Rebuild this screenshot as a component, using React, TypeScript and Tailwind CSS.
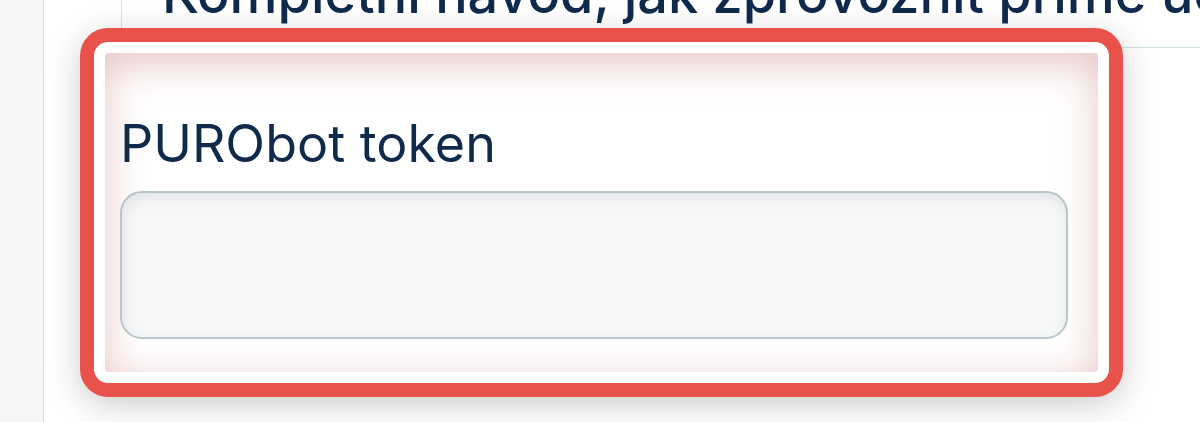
export default function App() {
  return (
    <div className="flex h-[422px] w-[1200px] overflow-hidden bg-white font-['Inter',sans-serif]">
      <div className="w-[44px] shrink-0 border-r border-[#d3e3e5] bg-[#f4f6f8]" />
      <div className="flex min-w-0 flex-1 flex-col">
        {/* previous section, cut off at the top */}
        <div className="ml-[77px] h-[48px] shrink-0 overflow-hidden border-b border-l border-[#d3e3e5]">
          <div className="-mt-[33px] whitespace-nowrap pl-[40px] text-[54px] font-medium leading-none text-[#0f2a4c]">
            Kompletní návod, jak zprovoznit přímé účtování
          </div>
        </div>

        {/* highlighted field */}
        <div className="relative z-10 -mt-[20px] ml-[36px] h-[369px] w-[1043px] shrink-0 rounded-[28px] border-[14px] border-[#e8524a] bg-white p-[11px] shadow-[0_8px_34px_rgba(0,0,0,0.2)]">
          <div className="flex h-full flex-col rounded-[4px] bg-white pl-[15px] pt-[65px] shadow-[inset_0_10px_42px_rgba(190,95,95,0.36)]">
            <label className="text-[52px] leading-none text-[#102a4c]">PURObot token</label>
            <input
              type="text"
              className="mt-[21px] h-[148px] w-[948px] rounded-[22px] border-2 border-[#b7c6c9] bg-[#f5f7f9] shadow-[inset_2px_5px_14px_rgba(0,0,0,0.08)] outline-none"
            />
          </div>
        </div>
      </div>
    </div>
  );
}
